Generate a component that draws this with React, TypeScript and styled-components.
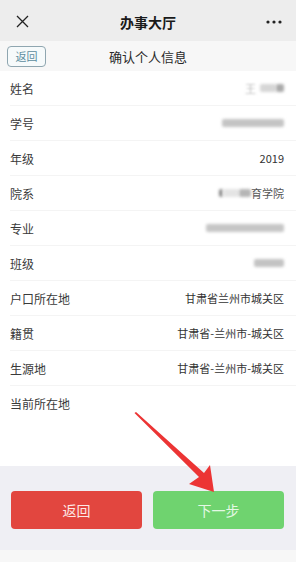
import React from "react";
import styled, { createGlobalStyle } from "styled-components";

const Global = createGlobalStyle`
  html, body { margin: 0; padding: 0; background: #ffffff; }
  body { font-family: "Noto Sans CJK SC", "Noto Sans", "Liberation Sans", sans-serif; }
`;

const Page = styled.div`
  position: relative;
  width: 296px;
  height: 562px;
  display: flex;
  flex-direction: column;
  background: #ffffff;
  overflow: hidden;
`;

const TopBar = styled.div`
  height: 41px;
  flex: none;
  background: #ededed;
  display: grid;
  grid-template-columns: 44px 1fr 44px;
  align-items: center;
`;

const TopTitle = styled.div`
  text-align: center;
  font-size: 14px;
  font-weight: 700;
  color: #1a1a1a;
  line-height: 1;
  padding-top: 2px;
`;

const IconCell = styled.div`
  display: flex;
  align-items: center;
  justify-content: center;
  padding-top: 2px;
`;

const SubBar = styled.div`
  height: 30px;
  flex: none;
  background: #f7f7f7;
  display: grid;
  grid-template-columns: 56px 1fr 56px;
  align-items: center;
`;

const BackTag = styled.div`
  margin-left: 7px;
  width: 37px;
  height: 19px;
  border: 1px solid #8fa6b0;
  border-radius: 4px;
  background: #f6fafb;
  color: #5c8c9e;
  font-size: 11px;
  line-height: 19px;
  text-align: center;
`;

const SubTitle = styled.div`
  text-align: center;
  font-size: 13px;
  color: #2a2a2a;
  line-height: 1;
`;

const List = styled.div`
  display: flex;
  flex-direction: column;
  padding-left: 10px;
`;

const Row = styled.div<{ $last?: boolean }>`
  height: 35px;
  box-sizing: border-box;
  display: flex;
  align-items: center;
  justify-content: space-between;
  padding-right: 12px;
  border-bottom: 1px solid ${(p) => (p.$last ? "transparent" : "#f4f4f4")};
`;

const Label = styled.span`
  font-size: 12px;
  color: #3a3a3a;
`;

const Value = styled.span`
  font-size: 11px;
  color: #333333;
  display: flex;
  align-items: center;
`;

const Blur = styled.span<{ $w: number; $tone?: string }>`
  display: inline-block;
  width: ${(p) => p.$w}px;
  height: 8px;
  background: ${(p) => p.$tone || "#c9c9c9"};
  filter: blur(1.6px);
  border-radius: 2px;
`;

const Faint = styled.span`
  color: #bbbbbb;
  filter: blur(0.8px);
  margin-right: 4px;
`;

const Soft = styled.span`
  color: #555555;
`;

const Spacer = styled.div`
  flex: 1;
`;

const Footer = styled.div`
  height: 84px;
  flex: none;
  background: #efeff4;
  box-sizing: border-box;
  padding: 25px 12px 0 11px;
  display: grid;
  grid-template-columns: 1fr 1fr;
  column-gap: 11px;
  align-items: start;
`;

const Btn = styled.div<{ $bg: string; $fg: string }>`
  height: 38px;
  border-radius: 4px;
  background: ${(p) => p.$bg};
  color: ${(p) => p.$fg};
  font-size: 14px;
  display: flex;
  align-items: center;
  justify-content: center;
`;

const BottomStrip = styled.div`
  height: 12px;
  flex: none;
  background: #f7f7f7;
`;

const ArrowLayer = styled.svg`
  position: absolute;
  left: 0;
  top: 0;
  pointer-events: none;
`;

const rows: { label: string; value: React.ReactNode }[] = [
  {
    label: "姓名",
    value: (
      <>
        <Faint>王</Faint>
        <Blur $w={16} $tone="#d6d6d6" />
        <Blur $w={8} $tone="#a9a9a9" />
      </>
    ),
  },
  { label: "学号", value: <Blur $w={62} $tone="#c4c4c4" /> },
  { label: "年级", value: "2019" },
  {
    label: "院系",
    value: (
      <>
        <Blur $w={4} $tone="#888" />
        <Blur $w={16} $tone="#e4e4e4" />
        <Blur $w={12} $tone="#b5b5b5" />
        <Soft>育学院</Soft>
      </>
    ),
  },
  { label: "专业", value: <Blur $w={78} $tone="#c6c6c6" /> },
  { label: "班级", value: <Blur $w={30} $tone="#c3c3c3" /> },
  { label: "户口所在地", value: "甘肃省兰州市城关区" },
  { label: "籍贯", value: "甘肃省-兰州市-城关区" },
  { label: "生源地", value: "甘肃省-兰州市-城关区" },
  { label: "当前所在地", value: "" },
];

export default function App() {
  return (
    <>
      <Global />
      <Page>
        <TopBar>
          <IconCell>
            <svg width="13" height="13" viewBox="0 0 13 13">
              <path d="M1 1 L12 12 M12 1 L1 12" stroke="#222" strokeWidth="1.3" />
            </svg>
          </IconCell>
          <TopTitle>办事大厅</TopTitle>
          <IconCell>
            <svg width="16" height="4" viewBox="0 0 16 4">
              <circle cx="2" cy="2" r="1.6" fill="#222" />
              <circle cx="8" cy="2" r="1.6" fill="#222" />
              <circle cx="14" cy="2" r="1.6" fill="#222" />
            </svg>
          </IconCell>
        </TopBar>
        <SubBar>
          <BackTag>返回</BackTag>
          <SubTitle>确认个人信息</SubTitle>
          <div />
        </SubBar>
        <List>
          {rows.map((r, i) => (
            <Row key={r.label} $last={i === rows.length - 1}>
              <Label>{r.label}</Label>
              <Value>{r.value}</Value>
            </Row>
          ))}
        </List>
        <Spacer />
        <Footer>
          <Btn $bg="#e2463f" $fg="#fde8e6">返回</Btn>
          <Btn $bg="#6fd36f" $fg="#e4f8e4">下一步</Btn>
        </Footer>
        <BottomStrip />
        <ArrowLayer width="296" height="562" viewBox="0 0 296 562">
          <path
            d="M134.5 413 L136 412 L204 473 L210 465 L214 492 L189 484 L199 477 Z"
            fill="#ec3434"
          />
        </ArrowLayer>
      </Page>
    </>
  );
}
